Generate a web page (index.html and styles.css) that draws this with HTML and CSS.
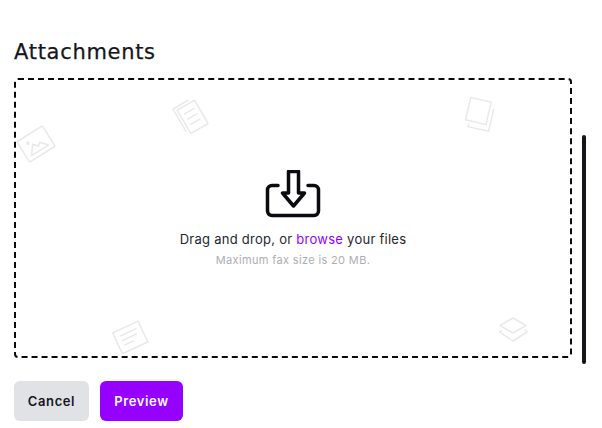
FILE: index.html
```html
<!DOCTYPE html>
<html lang="en">
<head>
<meta charset="utf-8">
<title>Attachments</title>
<link rel="stylesheet" href="styles.css">
</head>
<body>
<main class="page">
  <h2 class="title">Attachments</h2>
  <section class="drop">
    <svg class="deco deco-image" viewBox="0 0 40 40" width="40" height="40" fill="none" stroke="#e9e9e9" stroke-width="1.5" stroke-linejoin="round">
      <g transform="rotate(-32 20 20)">
        <rect x="5" y="8" width="30" height="24" rx="1"/>
        <path d="M10 27.500l7-9 4 4.500 3-2.500 6 7z"/>
        <circle cx="13.500" cy="15" r="1"/>
      </g>
    </svg>
    <svg class="deco deco-doc" viewBox="0 0 40 40" width="40" height="40" fill="none" stroke="#e9e9e9" stroke-width="1.5" stroke-linejoin="round">
      <g transform="rotate(-30 20 20)">
        <rect x="11" y="8" width="20" height="27"/>
        <path d="M8 31V5h18"/>
        <path d="M15 15h12M15 21h12M15 27h12"/>
      </g>
    </svg>
    <svg class="deco deco-copy" viewBox="0 0 40 40" width="40" height="40" fill="none" stroke="#e9e9e9" stroke-width="1.5" stroke-linejoin="round">
      <g transform="rotate(13 20 20)">
        <rect x="7" y="5" width="21" height="23"/>
        <path d="M32 11v23H11v-3"/>
      </g>
    </svg>
    <svg class="deco deco-note" viewBox="0 0 40 40" width="40" height="40" fill="none" stroke="#e9e9e9" stroke-width="1.5" stroke-linejoin="round" stroke-linecap="round">
      <g transform="rotate(-25 20 20)">
        <rect x="6" y="9" width="28" height="23"/>
        <path d="M12 15h17M12 20h15M12 25h9"/>
      </g>
    </svg>
    <svg class="deco deco-layers" viewBox="0 0 40 40" width="40" height="40" fill="none" stroke="#e9e9e9" stroke-width="1.5" stroke-linejoin="round">
      <path d="M20 8l13 7.500-13 7.500-13-7.500z"/>
      <path d="M9 20l-2.500 2 13.500 9 14-9-2.500-2.500"/>
    </svg>

    <svg class="upload" viewBox="0 0 56 48" width="56" height="48" fill="none" stroke="#0b0b0f" stroke-width="3.500" stroke-linejoin="round" stroke-linecap="round">
      <path d="M13 15.500H7a4.500 4.500 0 0 0-4.500 4.500v21a4.500 4.500 0 0 0 4.500 4.500h42a4.500 4.500 0 0 0 4.500-4.500V20a4.500 4.500 0 0 0-4.500-4.500h-6"/>
      <path d="M23.500 1.500h10v21.500h6L28.500 36 17.500 23h6z"/>
    </svg>
    <p class="lead">Drag and drop, or <a class="browse" href="#">browse</a> your files</p>
    <p class="hint">Maximum fax size is 20 MB.</p>
  </section>
  <div class="actions">
    <button class="btn btn-cancel" type="button">Cancel</button>
    <button class="btn btn-preview" type="button">Preview</button>
  </div>
</main>
<div class="scrollbar"></div>
</body>
</html>
```
FILE: styles.css
```css
* { box-sizing: border-box; }
html, body { margin: 0; padding: 0; background: #fff; overflow: hidden; height: 100%; }
body { font-family: Inter, "Liberation Sans", sans-serif; color: #16161a; }
.page { padding: 38px 30px 0 14px; }
.title {
  margin: 0 0 12px;
  font: 400 21px/28px "DejaVu Sans", Inter, sans-serif;
  letter-spacing: 0.7px;
  -webkit-text-stroke: 0.25px #16161a;
  color: #16161a;
}
.drop {
  position: relative;
  height: 280px;
  border: 2px dashed #0b0b0f;
  border-radius: 4px;
  display: flex;
  flex-direction: column;
  align-items: center;
  padding-top: 90px;
}
.deco { position: absolute; }
.deco-image { left: 0; top: 44px; }
.deco-doc { left: 155px; top: 16px; }
.deco-copy { left: 444px; top: 15px; }
.deco-note { left: 94px; top: 237px; }
.deco-layers { left: 477px; top: 230px; }
.upload { display: block; }
.lead { margin: 11px 0 0; font-size: 13px; line-height: 20px; letter-spacing: 0.26px; color: #26262a; }
.browse { color: #9500ff; text-decoration: none; }
.hint { margin: 3px 0 0; font-size: 11px; line-height: 16px; color: #aeaeb2; letter-spacing: 0.35px; }
.actions { display: flex; gap: 11px; margin-top: 23px; }
.btn {
  height: 40px;
  border: 0;
  border-radius: 6px;
  font: 600 13px/16px Inter, "Liberation Sans", sans-serif;
  padding: 0;
  letter-spacing: 0.6px;
}
.btn-cancel { width: 75px; background: #e1e2e6; color: #16161a; }
.btn-preview { width: 83px; background: #9500ff; color: #fff; }
.scrollbar {
  position: absolute;
  left: 582px;
  top: 135px;
  width: 4px;
  height: 229px;
  border-radius: 2px;
  background: #16161a;
}
```
